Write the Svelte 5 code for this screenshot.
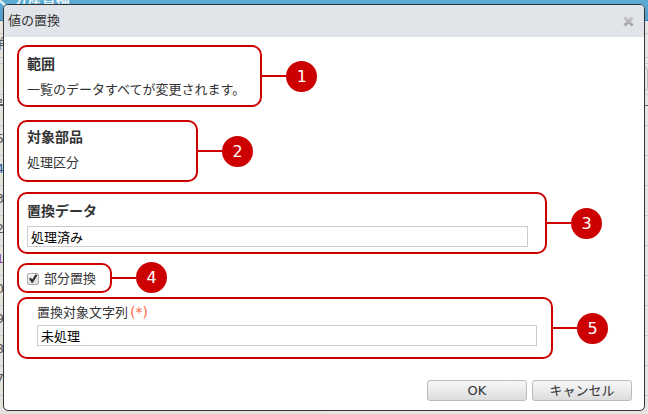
<script>
  let replacement = $state('処理済み');
  let target = $state('未処理');
  let partial = $state(true);
  const rows = ['5', '4', '3', '2', '1', '0', '9', '8', '7'];
</script>

{#snippet badge(n)}
  <span class="wire"></span><span class="badge">{n}</span>
{/snippet}

<div class="page">
  <div class="backdrop" aria-hidden="true">
    <div class="appbar"><span>ぐ 分産質補</span></div>
    <div class="tabs"></div>
    <div class="tools"><span>詳</span></div>
    <div class="band"></div>
    <div class="filter"><i></i></div>
    <div class="thead"><span>号</span></div>
    <div class="lead"></div>
    {#each rows as r}
      <div class="row"><span class:link={r === '4'} class:visited={r === '1'}>{r}</span></div>
    {/each}
  </div>

  <div class="dialog" role="dialog" aria-labelledby="title">
    <header>
      <span id="title">値の置換</span>
      <button class="close" type="button" aria-label="閉じる">
        <svg width="11" height="11" viewBox="0 0 11 11">
          <defs>
            <linearGradient id="cross" x1="0" y1="0" x2="0" y2="1">
              <stop offset="0" stop-color="#cfcfcf" />
              <stop offset="1" stop-color="#a6a6a6" />
            </linearGradient>
            <linearGradient id="edge" x1="0" y1="0" x2="0" y2="1">
              <stop offset="0" stop-color="#a8a8a8" />
              <stop offset="1" stop-color="#6c6c6c" />
            </linearGradient>
          </defs>
          <path d="M2.5 1 5.5 3.8 8.5 1 10 2.5 7.2 5.5 10 8.5 8.5 10 5.5 7.2 2.5 10 1 8.5 3.8 5.5 1 2.5Z" fill="url(#cross)" stroke="url(#edge)" stroke-width=".8" stroke-dasharray="1.2 .8" />
        </svg>
      </button>
    </header>

    <form onsubmit={(e) => e.preventDefault()}>
      <section class="item range">
        <div class="frame">
          <h2>範囲</h2>
          <p>一覧のデータすべてが変更されます。</p>
        </div>
        {@render badge(1)}
      </section>

      <section class="item parts">
        <div class="frame">
          <h2>対象部品</h2>
          <p>処理区分</p>
        </div>
        {@render badge(2)}
      </section>

      <section class="item data">
        <div class="frame">
          <label class="heading" for="replacement">置換データ</label>
          <input id="replacement" type="text" bind:value={replacement} />
        </div>
        {@render badge(3)}
      </section>

      <section class="item partial">
        <div class="frame">
          <input id="partial" type="checkbox" bind:checked={partial} />
          <label for="partial">部分置換</label>
        </div>
        {@render badge(4)}
      </section>

      <section class="item target">
        <div class="frame">
          <label for="target">置換対象文字列<span class="required">(*)</span></label>
          <input id="target" type="text" bind:value={target} />
        </div>
        {@render badge(5)}
      </section>

      <footer>
        <button type="submit">OK</button>
        <button type="button">キャンセル</button>
      </footer>
    </form>
  </div>
</div>

<style>
  :global(body) {
    margin: 0;
    background: #e5e5e5;
  }
  .page {
    position: relative;
    overflow: hidden;
    padding: 4px 3px 3px;
    font: 13px/20px 'DejaVu Sans', 'Noto Sans CJK JP', sans-serif;
    color: #333;
  }
  * {
    box-sizing: border-box;
  }
  .backdrop {
    position: absolute;
    inset: 0;
    overflow: hidden;
    background: linear-gradient(90deg, #e5e2de 50%, #e5e5e5 50%);
    color: #555;
  }
  .backdrop > div {
    border-bottom: 1px solid #c8c8c8;
    overflow: hidden;
    white-space: nowrap;
  }
  .backdrop .appbar {
    height: 21px;
    background: linear-gradient(#5bacd4, #529dcb);
    border-bottom-color: #2f7fae;
    color: #e8f3f8;
    font-size: 14px;
    font-weight: bold;
  }
  .appbar span {
    display: block;
    margin: -11px 0 0 -5px;
    line-height: 20px;
  }
  .tabs {
    height: 13px;
  }
  .tools {
    height: 24px;
  }
  .band {
    height: 6px;
  }
  .filter {
    height: 31px;
    display: flex;
    align-items: center;
    justify-content: flex-end;
  }
  .filter i {
    width: 4px;
    height: 24px;
    border: 1px solid #bbb;
    border-left: 0;
    border-radius: 0 8px 8px 0;
  }
  .backdrop .thead {
    height: 11px;
    border-bottom-color: #666;
  }
  .lead {
    height: 20px;
  }
  .row {
    height: 30px;
    line-height: 26px;
  }
  .tools span,
  .thead span,
  .row span {
    display: block;
    width: 4px;
    direction: rtl;
  }
  .link {
    color: #2a5fa0;
  }
  .visited {
    color: #8a3a8c;
  }

  .dialog {
    position: relative;
    border: 1px solid #333;
    border-radius: 5px;
    background: #fff;
    overflow: hidden;
  }
  header {
    display: flex;
    align-items: center;
    justify-content: space-between;
    height: 32px;
    padding: 0 10px 0 4px;
    background: #e1e4e9;
  }
  .close {
    display: flex;
    padding: 0;
    border: 0;
    background: none;
  }
  form {
    display: flex;
    flex-direction: column;
    padding: 8px 12px 9px 13px;
  }
  .item {
    display: flex;
    align-items: center;
  }
  .frame {
    display: flex;
    flex-direction: column;
    gap: 5px;
    min-height: 62px;
    padding: 7px 12px 0 8px;
    border: 2px solid #c00;
    border-radius: 10px;
  }
  .wire {
    flex: none;
    width: 24px;
    height: 2px;
    background: #c00;
  }
  .badge {
    flex: none;
    width: 31px;
    height: 31px;
    border-radius: 50%;
    background: #c00;
    color: #fff;
    font-size: 16px;
    line-height: 31px;
    text-align: center;
  }
  h2,
  .heading {
    margin: 0;
    font-size: 14px;
    font-weight: bold;
    line-height: 20px;
  }
  p {
    margin: 0;
    line-height: 22px;
  }
  .range .frame {
    padding-right: 15px;
  }
  .parts {
    margin-top: 13px;
  }
  .parts .frame {
    width: 181px;
    padding-top: 5px;
  }
  .data {
    margin-top: 10px;
    padding-right: 30px;
  }
  .data .frame,
  .target .frame {
    flex: 1;
    min-width: 0;
    padding-right: 17px;
  }
  .partial {
    margin-top: 8px;
  }
  .partial .frame {
    flex-direction: row;
    align-items: center;
    width: 95px;
    min-height: 30px;
    padding: 2px 0 0 8px;
    white-space: nowrap;
  }
  .target {
    margin-top: 4px;
    padding-right: 24px;
  }
  .target .frame {
    gap: 2px;
    padding: 3px 14px 0 18px;
  }
  .required {
    margin-left: 2px;
    color: #f64;
    font-size: 14px;
  }
  input[type='text'] {
    width: 100%;
    height: 21px;
    padding: 0 3px;
    border: 1px solid #ccc;
    background: #fff;
    color: #000;
    font: inherit;
    outline: 0;
  }
  input[type='checkbox'] {
    appearance: none;
    flex: none;
    display: grid;
    place-items: center;
    width: 12px;
    height: 12px;
    margin: 0;
    border: 1px solid #aaa;
    border-radius: 2px;
    background: linear-gradient(#f4f4f4, #ddd);
  }
  input[type='checkbox']:checked::before {
    content: '';
    width: 10px;
    height: 10px;
    background: #333;
    clip-path: polygon(10% 50%, 28% 42%, 42% 60%, 75% 8%, 95% 18%, 48% 92%, 36% 92%);
  }
  footer {
    display: flex;
    justify-content: flex-end;
    gap: 5px;
    margin-top: 21px;
  }
  footer button {
    width: 100px;
    height: 21px;
    padding: 0;
    border: 1px solid #bbb;
    border-radius: 3px;
    background: linear-gradient(#f8f8f8, #dcdcdc);
    color: #333;
    font: inherit;
    line-height: 18px;
  }
</style>
